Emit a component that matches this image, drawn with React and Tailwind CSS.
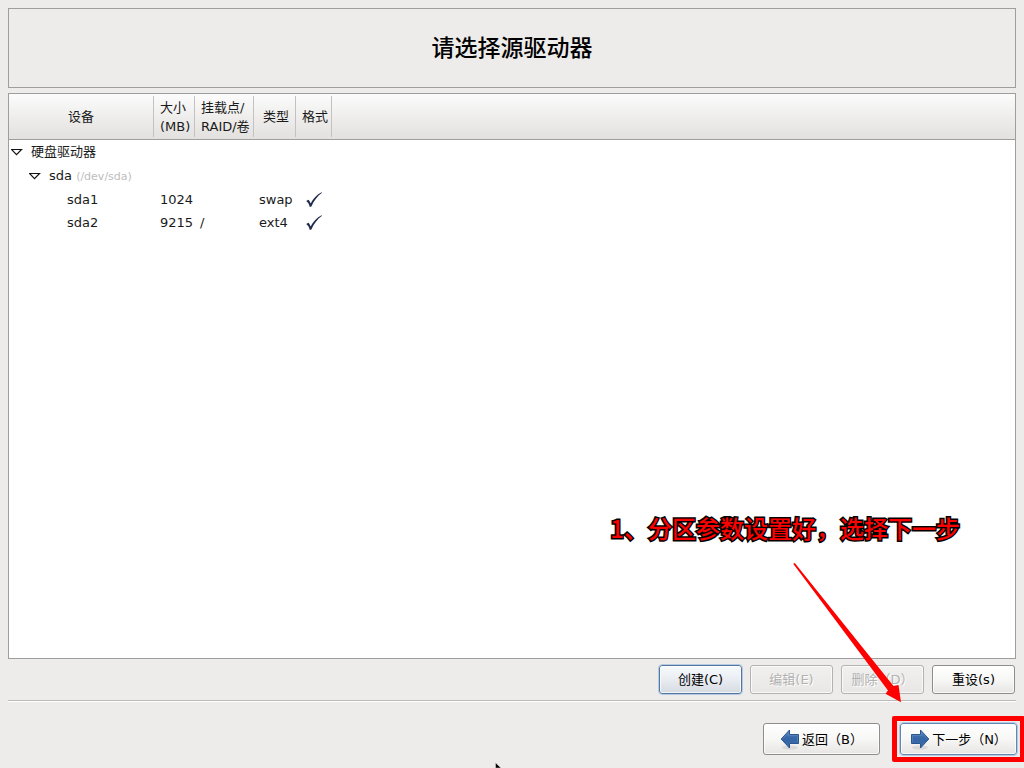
import React from "react";

const partitions = [
  { name: "sda1", size: "1024", mount: "", type: "swap" },
  { name: "sda2", size: "9215", mount: "/", type: "ext4" },
];

function Expander() {
  return (
    <svg className="h-[8px] w-[12px] shrink-0" viewBox="0 0 12 8" aria-hidden="true">
      <path d="M.5 1.5H10.5L5.5 6.6Z" fill="#fff" stroke="#111" strokeWidth="1.2" />
    </svg>
  );
}

function Tick() {
  return (
    <svg className="h-[17px] w-[18px]" viewBox="0 0 18 17" role="img" aria-label="是">
      <path
        d="M1.2 10L3.4 8.8C4.5 9.8 5.1 11 5.6 12.6C8.2 7.6 11.8 3.6 16.6 1.2L17 1.7C12.2 5.2 8.6 10 6.4 15.4L4.8 16C4.2 13.6 3.2 11.4 1.2 10Z"
        fill="#1f2a4d"
      />
    </svg>
  );
}

function ArrowIcon({ left }) {
  return (
    <svg className="h-[22px] w-[20px] shrink-0" viewBox="0 0 20 22" aria-hidden="true">
      <defs>
        <linearGradient id={left ? "blueLeft" : "blueRight"} x1="0" y1="0" x2="0" y2="1">
          <stop offset="0" stopColor="#4f80b8" />
          <stop offset="0.5" stopColor="#3565a5" />
          <stop offset="1" stopColor="#3b6dab" />
        </linearGradient>
      </defs>
      <ellipse cx="10" cy="19.5" rx="8" ry="2" fill="#000" opacity=".08" />
      <g transform={left ? "translate(20 0) scale(-1 1)" : undefined}>
        <path
          d="M1.5 6.5H10.5V2L18.8 11L10.5 20V15.5H1.5Z"
          fill={left ? "url(#blueLeft)" : "url(#blueRight)"}
          stroke="#2a5590"
          strokeLinejoin="round"
        />
        <path d="M2.5 14.5V7.5H11.5V4.5L17.4 11" fill="none" stroke="#6f98c8" strokeWidth=".6" opacity=".7" />
      </g>
    </svg>
  );
}

const base =
  "flex items-center justify-center rounded-[3px] border whitespace-nowrap shadow-[inset_0_0_0_1px_rgba(255,255,255,0.7)]";
const plain = "border-[#8d8d8b] bg-linear-to-b from-white via-[#f7f7f6] to-[#e6e5e4] text-black";
const disabled =
  "border-[#b3b2b0] bg-linear-to-b from-[#f1f0ef] to-[#e8e7e6] text-[#b2b1b0] [text-shadow:1px_1px_0_#fff]";
const focused =
  "border-[#53779f] bg-linear-to-b from-[#f8fafc] via-[#e9edf2] to-[#d6dbe2] text-black outline outline-[#b5cbe3]";
const nextStyle =
  "border-[#6486b0] bg-linear-to-b from-white via-[#f7f7f6] to-[#e6e5e4] text-black outline outline-[#b5cbe3]";
const headCell =
  "border-r border-[#c3c2c0] p-0 font-normal [border-image:linear-gradient(to_bottom,transparent_3px,#c3c2c0_3px,#c3c2c0_42px,transparent_42px)_1]";

export default function App() {
  return (
    <div className="flex min-h-screen flex-col overflow-hidden bg-[#edeceb] pt-2 font-['DejaVu_Sans','Noto_Sans_CJK_SC',sans-serif] text-[13px] leading-[19px] text-[#1a1a1a]">
      <header className="mx-2 flex h-[80px] items-center justify-center border border-[#9f9e9c]">
        <h1 className="text-[23px] leading-[30px] font-medium text-black">请选择源驱动器</h1>
      </header>

      <main className="mx-2 mt-[5px] flex flex-1 flex-col">
        <div className="flex-1 border border-[#9f9e9c] bg-white">
          <table className="w-full table-fixed border-separate border-spacing-0 text-left">
            <colgroup>
              <col className="w-[145px]" />
              <col className="w-[41px]" />
              <col className="w-[59px]" />
              <col className="w-[42px]" />
              <col className="w-[36px]" />
              <col />
            </colgroup>
            <thead className="[&_tr]:bg-linear-to-b [&_tr]:from-[#fcfcfc] [&_tr]:via-[#efeeed] [&_tr]:to-[#e2e1df]">
              <tr className="h-[45px] shadow-[0_1px_0_#9f9e9c]">
                <th className={`${headCell} text-center`}>设备</th>
                <th className={`${headCell} pl-[6px]`}>大小<br />(MB)</th>
                <th className={`${headCell} pl-[6px]`}>挂载点/<br />RAID/卷</th>
                <th className={`${headCell} pl-[9px]`}>类型</th>
                <th className={`${headCell} pl-[6px]`}>格式</th>
                <td />
              </tr>
            </thead>
            <tbody>
              <tr className="h-[25px]">
                <td colSpan={6} className="p-0">
                  <div className="flex items-center gap-[8px] pl-[2px]">
                    <Expander />
                    <span>硬盘驱动器</span>
                  </div>
                </td>
              </tr>
              <tr className="h-[24px]">
                <td colSpan={6} className="p-0">
                  <div className="flex items-center gap-[8px] pl-[20px]">
                    <Expander />
                    <span>
                      sda <span className="text-[11px] text-[#bdbdbd]">(/dev/sda)</span>
                    </span>
                  </div>
                </td>
              </tr>
              {partitions.map((p) => (
                <tr key={p.name} className="h-[23px]">
                  <td className="p-0 pl-[58px]">{p.name}</td>
                  <td className="p-0 pl-[6px]">{p.size}</td>
                  <td className="p-0 pl-[5px]">{p.mount}</td>
                  <td className="p-0 pl-[5px]">{p.type}</td>
                  <td className="p-0 pl-[9px]"><Tick /></td>
                  <td />
                </tr>
              ))}
            </tbody>
          </table>
        </div>

        <div className="flex justify-end gap-[8px] border-b border-[#bbbab8] pt-[6px] pr-px pb-[6px] shadow-[0_1px_0_#fff]">
          <button type="button" className={`${base} ${focused} h-[29px] w-[83px]`}>创建(C)</button>
          <button type="button" disabled className={`${base} ${disabled} h-[29px] w-[83px]`}>编辑(E)</button>
          <button type="button" disabled className={`${base} ${disabled} h-[29px] w-[83px]`}>删除（D）</button>
          <button type="button" className={`${base} ${plain} h-[29px] w-[83px]`}>重设(s)</button>
        </div>
      </main>

      <footer className="relative flex justify-end gap-[20px] pt-[22px] pr-[7px] pb-[13px]">
        <button type="button" className={`${base} ${plain} h-[32px] w-[117px] gap-[2px]`}>
          <ArrowIcon left />
          返回（B）
        </button>
        <div className="relative">
          <button type="button" className={`${base} ${nextStyle} h-[32px] w-[117px] gap-[2px]`}>
            <ArrowIcon />
            下一步（N）
          </button>
          <div className="pointer-events-none absolute -inset-x-[8px] -top-[7px] -bottom-[7px] rounded-[2px] border-[5px] border-[#fe0000]" />
          <svg
            className="pointer-events-none absolute right-[114px] bottom-[52px] h-[142px] w-[112px]"
            viewBox="0 0 112 142"
            aria-hidden="true"
          >
            <path d="M2.2 2.8L3.8 2L102.5 125L107.5 124L110 141.2L94.5 132.8L97 129.5Z" fill="#fe0000" />
          </svg>
          <p className="pointer-events-none absolute right-[57px] bottom-[209px] font-['Noto_Sans_CJK_SC',sans-serif] text-[24px] leading-[36px] font-medium whitespace-nowrap text-[#fe0000] [-webkit-text-stroke:3px_#000] [paint-order:stroke_fill]">
            1、分区参数设置好，选择下一步
          </p>
        </div>
        <svg
          className="pointer-events-none absolute bottom-0 left-[48.3%] h-[6px] w-[7px]"
          viewBox="0 0 7 6"
          aria-hidden="true"
        >
          <path d="M.5 6V.8L6 6Z" fill="#000" stroke="#fff" strokeWidth=".4" />
        </svg>
      </footer>
    </div>
  );
}
